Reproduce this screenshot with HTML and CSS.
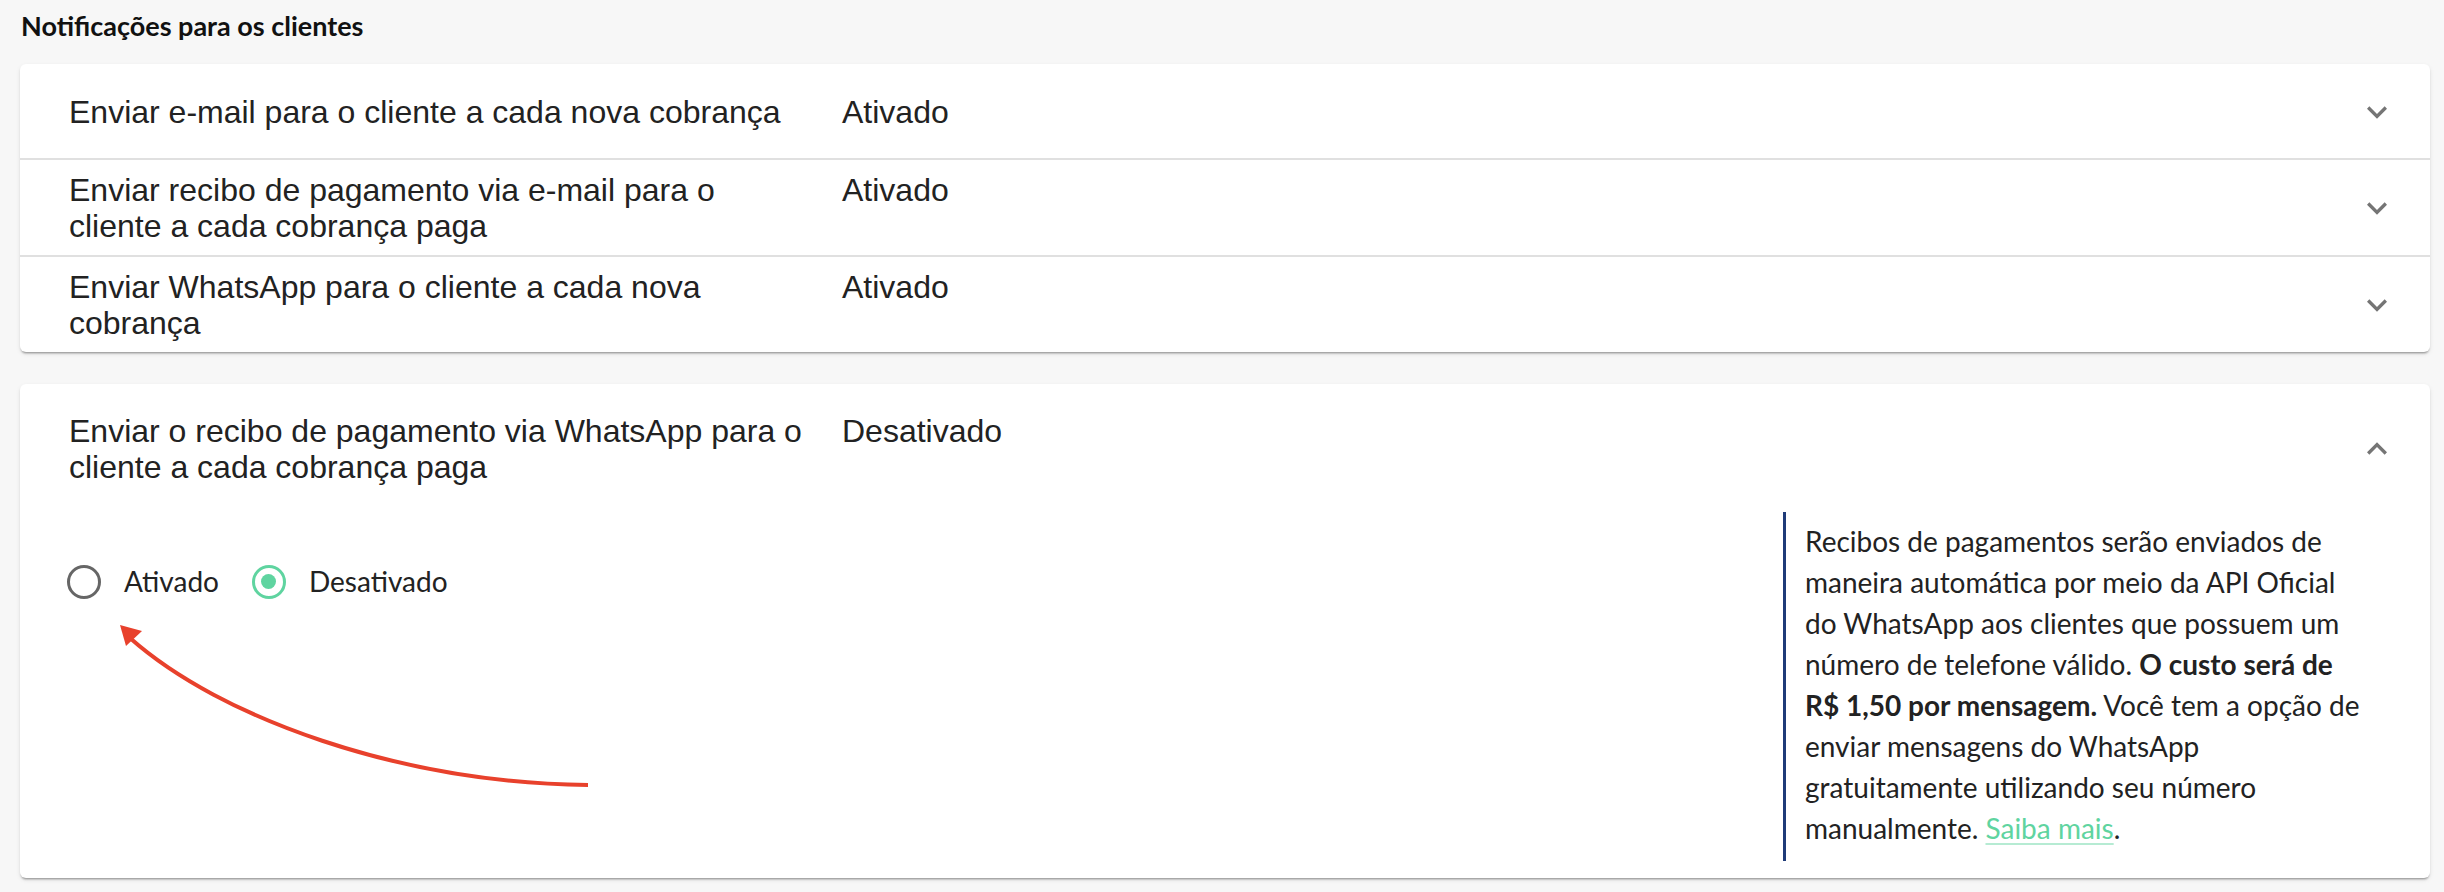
FILE: index.html
```html
<!DOCTYPE html>
<html lang="pt-BR">
<head>
<meta charset="utf-8">
<title>Notificações para os clientes</title>
<link rel="stylesheet" href="styles.css">
</head>
<body>
<main class="page">
  <h2 class="section-title">Notificações para os clientes</h2>

  <section class="card">
    <div class="row">
      <div class="row-content">
        <div class="label">Enviar e-mail para o cliente a cada nova cobrança</div>
        <div class="value">Ativado</div>
      </div>
      <svg class="chev" viewBox="0 0 24 24"><path d="M16.59 8.59 12 13.17 7.41 8.59 6 10l6 6 6-6z"/></svg>
    </div>
    <div class="row">
      <div class="row-content">
        <div class="label">Enviar recibo de pagamento via e-mail para o cliente a cada cobrança paga</div>
        <div class="value">Ativado</div>
      </div>
      <svg class="chev" viewBox="0 0 24 24"><path d="M16.59 8.59 12 13.17 7.41 8.59 6 10l6 6 6-6z"/></svg>
    </div>
    <div class="row">
      <div class="row-content">
        <div class="label">Enviar WhatsApp para o cliente a cada nova cobrança</div>
        <div class="value">Ativado</div>
      </div>
      <svg class="chev" viewBox="0 0 24 24"><path d="M16.59 8.59 12 13.17 7.41 8.59 6 10l6 6 6-6z"/></svg>
    </div>
  </section>

  <section class="card">
    <div class="row row-open">
      <div class="row-content">
        <div class="label">Enviar o recibo de pagamento via WhatsApp para o cliente a cada cobrança paga</div>
        <div class="value">Desativado</div>
      </div>
      <svg class="chev" viewBox="0 0 24 24"><path d="M12 8l-6 6 1.41 1.41L12 10.83l4.59 4.58L18 14z"/></svg>
    </div>
    <div class="details">
      <div class="radios">
        <label class="radio"><span class="radio-dot"></span><span class="radio-text">Ativado</span></label>
        <label class="radio radio-checked"><span class="radio-dot"></span><span class="radio-text">Desativado</span></label>
      </div>
      <aside class="info">
        Recibos de pagamentos serão enviados de maneira automática por meio da API Oficial do WhatsApp aos clientes que possuem um número de telefone válido. <strong>O custo será de R$&nbsp;1,50 por mensagem.</strong> Você tem a opção de enviar mensagens do WhatsApp gratuitamente utilizando seu número manualmente. <a class="link" href="#">Saiba&nbsp;mais</a>.
      </aside>
      <svg class="arrow" viewBox="0 0 620 300" width="620" height="300">
        <path d="M568 273 C380 271, 200 206, 110 126" fill="none" stroke="#e8412c" stroke-width="4"/>
        <polygon points="100,113 106,134 122,119" fill="#e8412c"/>
      </svg>
    </div>
  </section>
</main>
</body>
</html>
```

FILE: styles.css
```css
* { box-sizing: border-box; }

html, body {
  margin: 0;
  padding: 0;
  background: #f7f7f7;
}

body {
  font-family: Lato, "Open Sans", sans-serif;
  color: #212121;
}

.page {
  padding: 10px 14px 0 20px;
}

.section-title {
  margin: 0 0 22px 1px;
  font-family: Lato, sans-serif;
  font-weight: 700;
  font-size: 27px;
  line-height: 32px;
  color: #111;
}

.card {
  background: #fff;
  border-radius: 6px;
  margin-bottom: 32px;
  box-shadow: 0 3px 2px -2px rgba(0,0,0,0.28), 0 2px 2px 0 rgba(0,0,0,0.10), 0 2px 5px 0 rgba(0,0,0,0.08);
}

.row {
  display: flex;
  align-items: center;
  min-height: 94px;
  padding: 12px 33px 11px 49px;
}

.row + .row {
  border-top: 2px solid #e0e0e0;
}

.row-open {
  padding-top: 29px;
  padding-bottom: 29px;
}

.row-content {
  flex: 1;
  display: flex;
  align-items: flex-start;
  font-family: "Liberation Sans", Arial, sans-serif;
  font-size: 32px;
  line-height: 36px;
  color: #222;
}

.label {
  width: 740px;
  margin-right: 33px;
}

.value {
  flex: 1;
}

.chev {
  width: 40px;
  height: 40px;
  fill: #757575;
  flex: none;
}

.details {
  position: relative;
  display: flex;
  justify-content: space-between;
  align-items: flex-start;
  padding: 0 67px 17px 47px;
  margin-top: -2px;
}

.radios {
  display: flex;
  align-items: center;
  padding-top: 49px;
}

.radio {
  display: flex;
  align-items: center;
  margin-right: 33px;
  font-size: 28px;
  line-height: 41px;
  color: #222;
}

.radio-dot {
  width: 34px;
  height: 34px;
  border-radius: 50%;
  border: 3.5px solid #666;
  margin-right: 23px;
  display: flex;
  align-items: center;
  justify-content: center;
}

.radio-checked .radio-dot {
  border-color: #5fd4a0;
}

.radio-checked .radio-dot::after {
  content: "";
  width: 15px;
  height: 15px;
  border-radius: 50%;
  background: #5fd4a0;
}

.info {
  width: 580px;
  border-left: 3px solid #1f3b78;
  padding: 9px 0 12px 19px;
  font-size: 28px;
  line-height: 41px;
  color: #222;
}

.info strong {
  font-weight: 700;
}

.link {
  color: #5fd4a0;
  text-decoration: underline;
  text-decoration-color: #b6ebd3;
  text-underline-offset: 4px;
}

.arrow {
  position: absolute;
  left: 0;
  top: 0;
  pointer-events: none;
}
```
